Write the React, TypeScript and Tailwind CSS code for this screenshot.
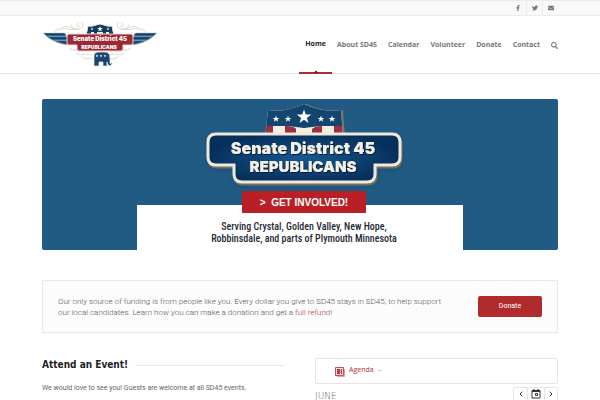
import React from "react";
import { ChevronLeft, ChevronRight } from "lucide-react";
import { FaFacebookF, FaTwitter, FaEnvelope, FaSearch } from "react-icons/fa";

const star = "M0-5 1.2-1.6 4.8-1.6 1.9.6 3 4 0 1.9-3 4-1.9.6-4.8-1.6-1.2-1.6Z";

function Wing() {
  return (
    <g>
      <path d="M1 11h22l3 6v6c-10-1-19-5-25-12Z" fill="#2f6a92" stroke="#d9d4c5" strokeWidth=".8" />
      <path d="M2 11.500h20l2 2H5ZM8 15.500h17v2H11ZM15 19.500h11v2.500Z" fill="#123a63" />
      <path d="M4 14.200h20M10 18.200h15" stroke="#b9cbd4" strokeWidth=".6" />
    </g>
  );
}

function Scroll() {
  return (
    <g fill="none" stroke="#cfc9b8" strokeWidth=".7">
      <path d="M12 9c5-2 9-3 15-2 5 1 10 1 13-2 2-3 1-6-3-5-4 2-2 6 1 4M20 6c4-4 9 0 12 1M30 2c-2 2 2 5 7 5" />
      <path d="M27 26c5 4 7 1 11 3 4 1 6-1 10 0M34 31c4 3 7 1 10 1 2 0 4 1 6 1M39 34c4 4 7 3 11 2" />
    </g>
  );
}

function HeaderLogo() {
  return (
    <svg viewBox="0 0 116 46" className="h-[46px] w-[116px]" role="img" aria-label="Senate District 45 Republicans">
      <Scroll />
      <g transform="translate(116 0) scale(-1 1)"><Scroll /></g>
      <Wing />
      <g transform="translate(116 0) scale(-1 1)"><Wing /></g>
      <path d="M46 4c5 1 7-1 12-2 5 1 7 3 12 2l2 10H44Z" fill="#15395f" stroke="#ece8dc" />
      <path d="M45 10h26v4H45Z" fill="#f3eee3" />
      <path d="M45 10h4v4h-4Zm7 0h3v4h-3Zm9 0h3v4h-3Zm6 0h4v4h-4Z" fill="#15395f" />
      <g fill="#fff">
        <path d={star} transform="translate(58 7) scale(.6)" />
        <path d={star} transform="translate(50 7) scale(.3)" />
        <path d={star} transform="translate(66 7) scale(.3)" />
      </g>
      <path d="M27 12h62q2 0 2 2v7q0 2-2 2h-8v4q0 2-2 2H37q-2 0-2-2v-4H27q-2 0-2-2v-7q0-2 2-2Z" fill="#9d2834" stroke="#e6e0d2" />
      <g fontFamily="Inter, sans-serif" fontWeight="900" textAnchor="middle" fill="#fff">
        <text x="58" y="19" fontSize="6">Senate District 45</text>
        <text x="57" y="27" fontSize="5">REPUBLICANS</text>
      </g>
      <path d="M52 34q0-4 5-4h6q5 0 5 6v5q0 1 1 0 1-1 1 1-2 3-4 1l-1-3v4h-4v-4h-4v4h-5Z" fill="#174672" stroke="#e6e0d2" strokeWidth=".8" />
      <g fill="#fff">
        <path d={star} transform="translate(55 34) scale(.3)" />
        <path d={star} transform="translate(59 34) scale(.3)" />
        <path d={star} transform="translate(63 34) scale(.3)" />
      </g>
    </svg>
  );
}

function HeroLogo() {
  const plate = "M12 31h176q8 0 8 8v15q0 8-8 8h-17v9q0 8-8 8H38q-8 0-8-8v-9H12q-8 0-8-8V39q0-8 8-8Z";
  return (
    <svg viewBox="0 0 200 88" className="h-[88px] w-[200px]" role="img" aria-label="Senate District 45 Republicans">
      <defs>
        <radialGradient id="plate" cx=".5" cy=".5" r=".5">
          <stop offset="0" stopColor="#155991" />
          <stop offset="1" stopColor="#06305b" />
        </radialGradient>
        <filter id="glow" x="-10%" y="-20%" width="120%" height="140%"><feGaussianBlur stdDeviation="3" /></filter>
        <filter id="edge"><feDropShadow dx="1" dy="1" stdDeviation="0" floodColor="#041f3e" /></filter>
        <clipPath id="shield"><path d="M64 7c13 2 22 0 36-6 14 6 24 8 37 6l2 27H61Z" /></clipPath>
      </defs>
      <path d={plate} fill="#123a58" opacity=".6" filter="url(#glow)" transform="translate(1 3)" />
      <path d="M66 7c13 2 22 0 36-6 14 6 24 8 37 6l2 27H61Z" fill="#7b7466" />
      <g clipPath="url(#shield)">
        <path d="M60 0h80v36H60Z" fill="#f3eee3" />
        <path d="M60 0h80v23H116l-16 2-16-2H60Z" fill="#12456f" />
        <path d="M60 23h9v12h-9Zm21 0c6 0 10 1 11 3v9H81Zm27 3c2-2 5-3 10-3v12h-10Zm22-3h10v12h-10Z" fill="#9b3040" />
      </g>
      <g fill="#fff">
        <path d={star} transform="translate(100 14) scale(1.500)" />
        <path d={star} transform="translate(84 16) scale(.7)" />
        <path d={star} transform="translate(72 16) scale(.7)" />
        <path d={star} transform="translate(117 16) scale(.7)" />
        <path d={star} transform="translate(128 16) scale(.7)" />
      </g>
      <path d={plate} transform="translate(1 2)" fill="#786f60" stroke="#786f60" strokeWidth="3" />
      <path d={plate} fill="url(#plate)" stroke="#eee9dd" strokeWidth="3" />
      <g fontFamily="Inter, sans-serif" fontWeight="900" textAnchor="middle" fill="#f4f0e6" filter="url(#edge)">
        <text x="99" y="51" fontSize="16">Senate District 45</text>
        <text x="99" y="69" fontSize="15">REPUBLICANS</text>
      </g>
    </svg>
  );
}

function AgendaIcon() {
  return (
    <svg viewBox="0 0 10 10" className="size-[10px]" aria-hidden="true">
      <path d="M.5.5h8v8h-8Z" fill="#f6dcdc" stroke="#b02b2c" strokeWidth=".8" />
      <path d="M2 2h3v5H2Zm4 0h1v5H6Z" fill="#b02b2c" />
      <path d="M2 3.500h5M2 5.500h5M9.500 2v7.500H2" fill="none" stroke="#c96a6a" strokeWidth=".6" />
    </svg>
  );
}

function TodayIcon() {
  return (
    <svg viewBox="0 0 10 10" className="size-[10px]" fill="none" stroke="#333" aria-hidden="true">
      <path d="M1 1.500h8v7.500H1Z" />
      <path d="M1 2.500h8M3 0v2M7 0v2" strokeWidth="1.200" />
      <path d="M4.500 4.500h2v2h-2Z" />
    </svg>
  );
}

const links = ["About SD45", "Calendar", "Volunteer", "Donate", "Contact"];
const socials = [
  { label: "Facebook", Icon: FaFacebookF },
  { label: "Twitter", Icon: FaTwitter },
  { label: "Mail", Icon: FaEnvelope },
];

export default function App() {
  return (
    <div className="bg-white font-['Open_Sans',sans-serif] text-[#777]">
      <div className="h-4 border-y border-[#ebebeb] bg-[#f8f8f8]">
        <div className="mx-auto flex h-full max-w-[516px] justify-end">
          {socials.map(({ label, Icon }) => (
            <a key={label} href="#" aria-label={label} className="flex w-4 items-center justify-center border-l border-[#ebebeb] text-[#777] first:border-l-0">
              <Icon className="size-[6px]" />
            </a>
          ))}
        </div>
      </div>

      <header className="h-[58px] border-b border-[#e6e6e6]">
        <div className="mx-auto flex h-full max-w-[516px] justify-between">
          <a href="#" className="pt-[6px]"><HeaderLogo /></a>
          <nav className="-mb-px flex items-stretch gap-[11px] text-[7px] font-bold">
            <a href="#" className="relative -mr-[6px] flex items-center border-b-2 border-[#b02b2c] px-[6px] text-[#222]">
              Home
              <span className="absolute -bottom-px left-1/2 size-[2px] -translate-x-1/2 rotate-45 bg-[#701010]" />
            </a>
            {links.map((l) => <a key={l} href="#" className="flex items-center">{l}</a>)}
            <button aria-label="Search" className="flex items-center"><FaSearch className="size-[7px]" /></button>
          </nav>
        </div>
      </header>

      <main className="mx-auto max-w-[516px] pt-[25px]">
        <section className="flex flex-col items-center rounded-[2px] bg-[#215b83] pt-[4px]">
          <div className="pl-[8px]"><HeroLogo /></div>
          <div className="mt-[14px] flex w-[63%] flex-col items-center bg-white pl-[8px] text-center">
            <a href="#" className="-mt-[14px] mb-[8px] flex h-[22px] w-[124px] items-center justify-center bg-[#b92025] text-[10px] font-bold whitespace-pre text-white font-['Liberation_Sans',sans-serif]">&gt;  GET INVOLVED!</a>
            <p className="pb-[5px] text-[10px] leading-[12px] font-medium text-[#1d2a35] font-['Roboto_Condensed',sans-serif]">
              Serving Crystal, Golden Valley, New Hope,<br />Robbinsdale, and parts of Plymouth Minnesota
            </p>
          </div>
        </section>

        <section className="mt-[30px] flex h-[53px] items-center justify-between border border-[#e8e8e8] bg-[#fcfcfc] px-[15px]">
          <p className="text-[8px] leading-[11px] font-light text-[#555] font-['Roboto',sans-serif]">
            Our only source of funding is from people like you. Every dollar you give to SD45 stays in SD45, to help support<br />
            our local candidates. Learn how you can make a donation and get a <a href="#" className="text-[#b02b2c]">full refund</a>!
          </p>
          <button className="h-[21px] w-16 rounded-[2px] bg-[#b02b2c] text-[7px] text-white font-['Roboto',sans-serif]">Donate</button>
        </section>

        <section className="mt-[25px] grid grid-cols-2 gap-[30px]">
          <div>
            <h2 className="flex items-center gap-[7px] text-[10px] leading-[14px] font-bold text-[#222] font-['DejaVu_Sans_Condensed','DejaVu_Sans',sans-serif]">
              Attend an Event!<span className="h-px grow bg-[#e8e8e8]" />
            </h2>
            <p className="mt-[11px] text-[7px] leading-[10px] text-[#666] font-['Roboto',sans-serif]">We would love to see you! Guests are welcome at all SD45 events.</p>
          </div>
          <div>
            <div className="flex h-[26px] items-center rounded-[2px] border border-[#e6e6e6] px-[19px]">
              <button className="flex gap-1 pb-[1px] text-[7px] leading-[10px] text-[#b02b2c]">
                <span className="pt-[2px]"><AgendaIcon /></span>Agenda<span className="text-[#999]">–</span>
              </button>
            </div>
            <div className="mt-[3px] flex h-[13px] justify-between">
              <h3 className="pt-[5px] text-[9px] leading-[8px] font-extralight text-[#555] font-['DejaVu_Sans',sans-serif]">JUNE</h3>
              <div className="flex rounded-t-[2px] border border-b-0 border-[#e6e6e6] text-[#333]">
                <button aria-label="Previous" className="flex w-[13px] items-center justify-center"><ChevronLeft size={8} strokeWidth={3} /></button>
                <button aria-label="Today" className="flex w-[18px] items-center justify-center border-x border-[#e6e6e6]"><TodayIcon /></button>
                <button aria-label="Next" className="flex w-[12px] items-center justify-center"><ChevronRight size={8} strokeWidth={3} /></button>
              </div>
            </div>
          </div>
        </section>
      </main>
    </div>
  );
}
